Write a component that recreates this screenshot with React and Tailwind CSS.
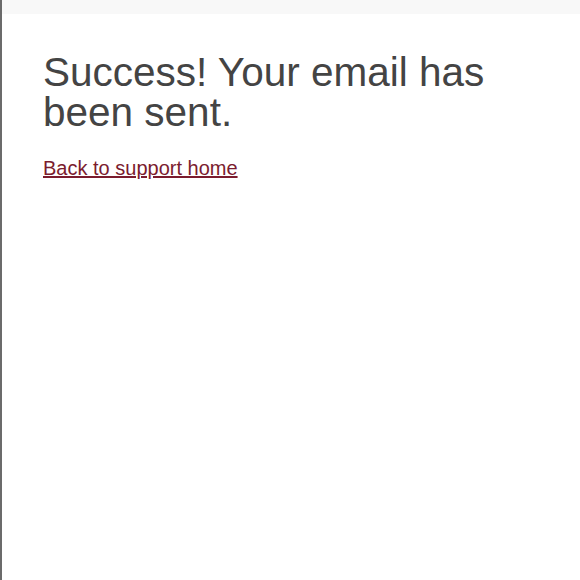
export default function App() {
  return (
    <div className="min-h-[580px] w-[580px] bg-white border-l-2 border-[#6b6b6b] font-['Liberation_Sans',Arial,sans-serif]">
      <div className="h-[14px] bg-[#f8f8f8]" />
      <div className="px-[41px] pt-[38px]">
        <h1 className="text-[40.5px] leading-[40px] text-[#444444]">
          Success! Your email has been sent.
        </h1>
        <a href="#" className="mt-[24px] inline-block text-[20px] leading-[24px] text-[#7b1c2e] underline">
          Back to support home
        </a>
      </div>
    </div>
  );
}
